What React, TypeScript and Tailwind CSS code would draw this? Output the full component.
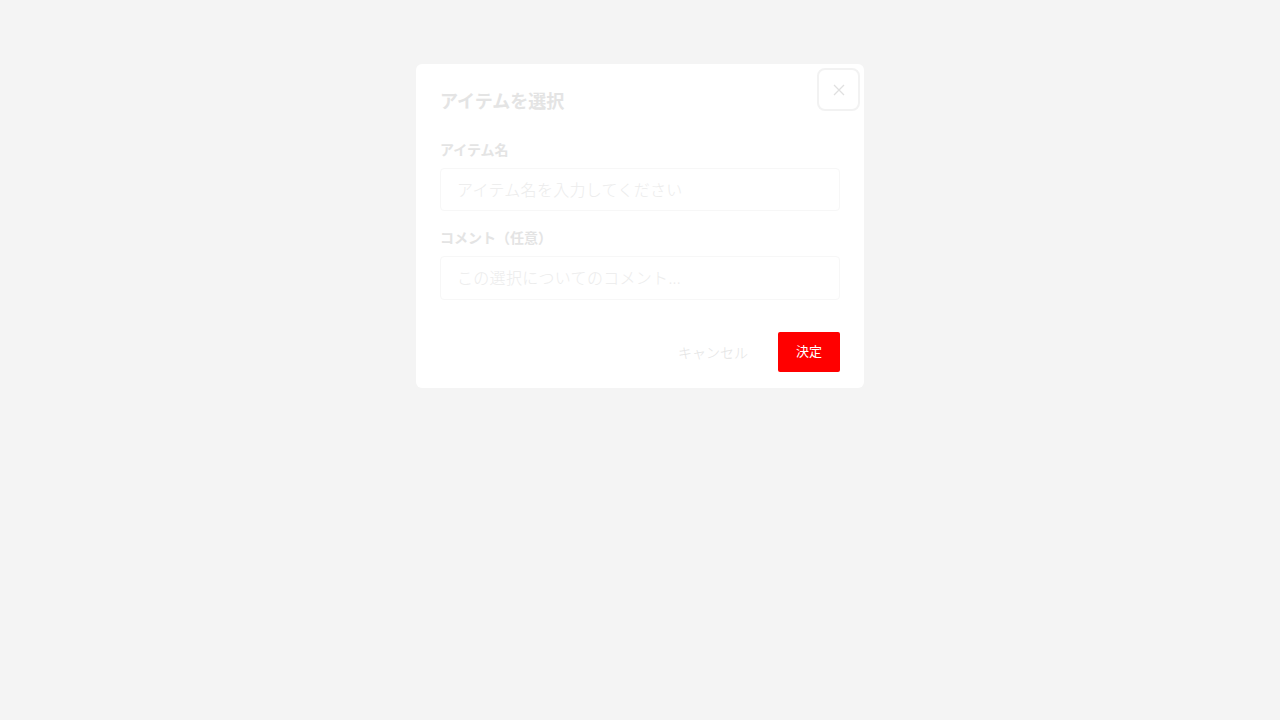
import React from "react";

export default function App() {
  return (
    <div
      className="min-h-screen w-full bg-[#f4f4f4] flex justify-center pt-[64px]"
      style={{ fontFamily: '"Noto Sans", "Noto Sans CJK JP", sans-serif' }}
    >
      <div className="relative w-[448px] h-fit bg-white rounded-[6px] px-6 pt-[24px] pb-[16px]">
        <button className="absolute top-[4px] right-[4px] w-[43px] h-[43px] rounded-[8px] border-2 border-[#f2f2f2] flex items-center justify-center text-[#e0e0e0]">
          <svg width="12" height="12" viewBox="0 0 12 12" fill="none" stroke="currentColor" strokeWidth="1.3">
            <path d="M1 1L11 11M11 1L1 11" />
          </svg>
        </button>
        <h2 className="text-[18px] font-bold leading-[26px] text-[#e4e4e4]">アイテムを選択</h2>
        <div className="mt-[26px] flex flex-col">
          <label className="text-[14px] font-bold leading-[20px] text-[#e4e4e4]">アイテム名</label>
          <div className="mt-[8px] h-[43px] rounded-[4px] border border-[#f7f7f7] flex items-center px-4 text-[16px] tracking-[0.3px] font-light text-[#ececec]">
            アイテム名を入力してください
          </div>
          <label className="mt-[17px] text-[14px] font-bold leading-[20px] text-[#e4e4e4]">コメント（任意）</label>
          <div className="mt-[8px] h-[44px] rounded-[4px] border border-[#f7f7f7] flex items-center px-4 text-[16px] tracking-[0.3px] font-light text-[#ececec]">
            この選択についてのコメント...
          </div>
        </div>
        <div className="mt-[32px] flex justify-end items-center gap-[14px]">
          <button className="h-[40px] px-4 text-[14px] font-light text-[#e4e4e4]">キャンセル</button>
          <button className="h-[40px] w-[62px] rounded-[2px] bg-[#ff0000] text-white text-[13px] font-normal">決定</button>
        </div>
      </div>
    </div>
  );
}
